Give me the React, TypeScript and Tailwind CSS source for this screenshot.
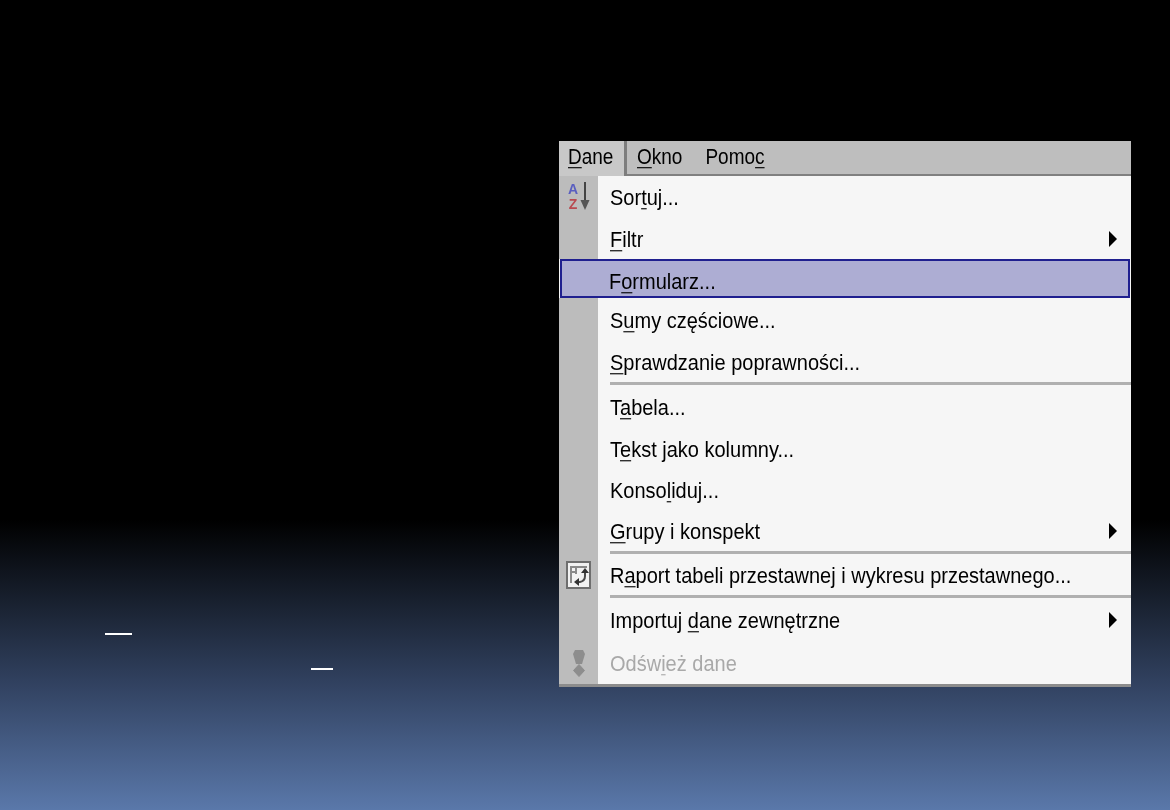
import type { ReactNode } from 'react';

type Row = {
  label: ReactNode;
  height: string;
  icon?: ReactNode;
  arrow?: boolean;
  active?: boolean;
  disabled?: boolean;
};

function SortIcon() {
  return (
    <div className="flex items-start gap-px">
      <div className="flex w-[12px] flex-col items-center text-[14px] font-bold leading-[15px]">
        <span className="text-[#5a5fc0]">A</span>
        <span className="text-[#b94a50]">Z</span>
      </div>
      <svg width="10" height="29" viewBox="0 0 10 29">
        <path d="M5 0v20" stroke="#444" strokeWidth="2" />
        <path d="M0.5 18h9L5 28z" fill="#555" />
      </svg>
    </div>
  );
}

function PivotIcon() {
  return (
    <svg width="25" height="28" viewBox="0 0 25 28">
      <rect x="1" y="1" width="23" height="26" fill="#f2f2f2" stroke="#6e6e6e" strokeWidth="2" />
      <path d="M4 6h17M4 11h7M5 6v16M10 6v7" stroke="#8a8a8a" strokeWidth="2" fill="none" />
      <path d="M19 10v5q0 5-5 6h-2" stroke="#4a4a4a" strokeWidth="2" fill="none" />
      <path d="M15 12l4-5 4 5zM13 17v8l-5-4z" fill="#333" />
    </svg>
  );
}

function RefreshIcon() {
  return (
    <svg width="14" height="28" viewBox="0 0 14 28">
      <path d="M3 1h8l2 4-3 10H4L1 5z" fill="#8d8d8d" />
      <path d="M7 15.5l5.5 6-5.5 6-5.5-6z" fill="#8d8d8d" stroke="#8d8d8d" strokeLinejoin="round" />
    </svg>
  );
}

function Separator({ height }: { height: string }) {
  return (
    <div className={`flex ${height}`}>
      <div className="w-[39px] bg-[#bcbcbc]" />
      <div className="flex flex-1 items-center pl-3">
        <div className="h-[3px] w-full bg-[#b0b0b0]" />
      </div>
    </div>
  );
}

function Label({ children }: { children: ReactNode }) {
  return (
    <span className="inline-block scale-y-[1.12] [&_u]:decoration-1 [&_u]:underline-offset-[3px]">{children}</span>
  );
}

function MenuRow({ label, height, icon, arrow, active, disabled }: Row) {
  if (active) {
    return (
      <div className={`flex ${height} items-center border-2 border-[#1f1f8f] bg-[#adadd3] mx-px pl-[47px] pt-[4px] text-black`}>
        <Label>{label}</Label>
      </div>
    );
  }
  return (
    <div className={`flex ${height}`}>
      <div className="flex w-[39px] items-center justify-center bg-[#bcbcbc]">{icon}</div>
      <div className={`flex flex-1 items-center justify-between pl-3 pr-[14px] ${disabled ? 'text-[#a9a9a9]' : 'text-black'}`}>
        <Label>{label}</Label>
        {arrow && <div className="h-0 w-0 border-y-[8px] border-l-[8px] border-y-transparent border-l-black" />}
      </div>
    </div>
  );
}

export default function App() {
  return (
    <div className="relative h-[810px] overflow-hidden bg-[linear-gradient(to_bottom,#000000_0,#000000_520px,#1b2434_610px,#30405e_680px,#5a78aa_810px)] pl-[559px] pt-[141px] font-['Liberation_Sans',sans-serif]">
      <div className="absolute left-[105px] top-[633px] h-[2px] w-[27px] bg-white" />
      <div className="absolute left-[311px] top-[668px] h-[2px] w-[22px] bg-white" />

      <div className="flex w-[572px] flex-col bg-[#f6f6f6] text-[20px] leading-none [filter:blur(0.5px)]">
        <div className="flex h-[35px] bg-[#bebebe] text-[19px] text-black">
          <div className="flex w-[68px] items-center border-r-[3px] border-[#7d7d7d] bg-[#c8c8c8] pb-[4px] pl-[9px]">
            <Label>
              <u>D</u>ane
            </Label>
          </div>
          <div className="flex flex-1 items-center gap-[23px] border-b-2 border-[#808080] pb-[3px] pl-[10px]">
            <Label>
              <u>O</u>kno
            </Label>
            <Label>
              Pomo<u>c</u>
            </Label>
          </div>
        </div>

        <MenuRow
          height="h-[42px]"
          icon={<SortIcon />}
          label={
            <>
              Sor<u>t</u>uj...
            </>
          }
        />
        <MenuRow
          height="h-[41px]"
          arrow
          label={
            <>
              <u>F</u>iltr
            </>
          }
        />
        <MenuRow
          height="h-[39px]"
          active
          label={
            <>
              F<u>o</u>rmularz...
            </>
          }
        />
        <MenuRow
          height="h-[44px]"
          label={
            <>
              S<u>u</u>my częściowe...
            </>
          }
        />
        <MenuRow
          height="h-[40px]"
          label={
            <>
              <u>S</u>prawdzanie poprawności...
            </>
          }
        />
        <Separator height="h-[3px]" />
        <MenuRow
          height="h-[43px]"
          label={
            <>
              T<u>a</u>bela...
            </>
          }
        />
        <MenuRow
          height="h-[41px]"
          label={
            <>
              T<u>e</u>kst jako kolumny...
            </>
          }
        />
        <MenuRow
          height="h-[41px]"
          label={
            <>
              Konso<u>l</u>iduj...
            </>
          }
        />
        <MenuRow
          height="h-[41px]"
          arrow
          label={
            <>
              <u>G</u>rupy i konspekt
            </>
          }
        />
        <Separator height="h-[3px]" />
        <MenuRow
          height="h-[41px]"
          icon={<PivotIcon />}
          label={
            <>
              R<u>a</u>port tabeli przestawnej i wykresu przestawnego...
            </>
          }
        />
        <Separator height="h-[3px]" />
        <MenuRow
          height="h-[44px]"
          arrow
          label={
            <>
              Importuj <u>d</u>ane zewnętrzne
            </>
          }
        />
        <MenuRow
          height="h-[42px]"
          disabled
          icon={<RefreshIcon />}
          label={
            <>
              Odśw<u>i</u>eż dane
            </>
          }
        />
        <div className="h-[3px] bg-[#8c8c8c]" />
      </div>
    </div>
  );
}
